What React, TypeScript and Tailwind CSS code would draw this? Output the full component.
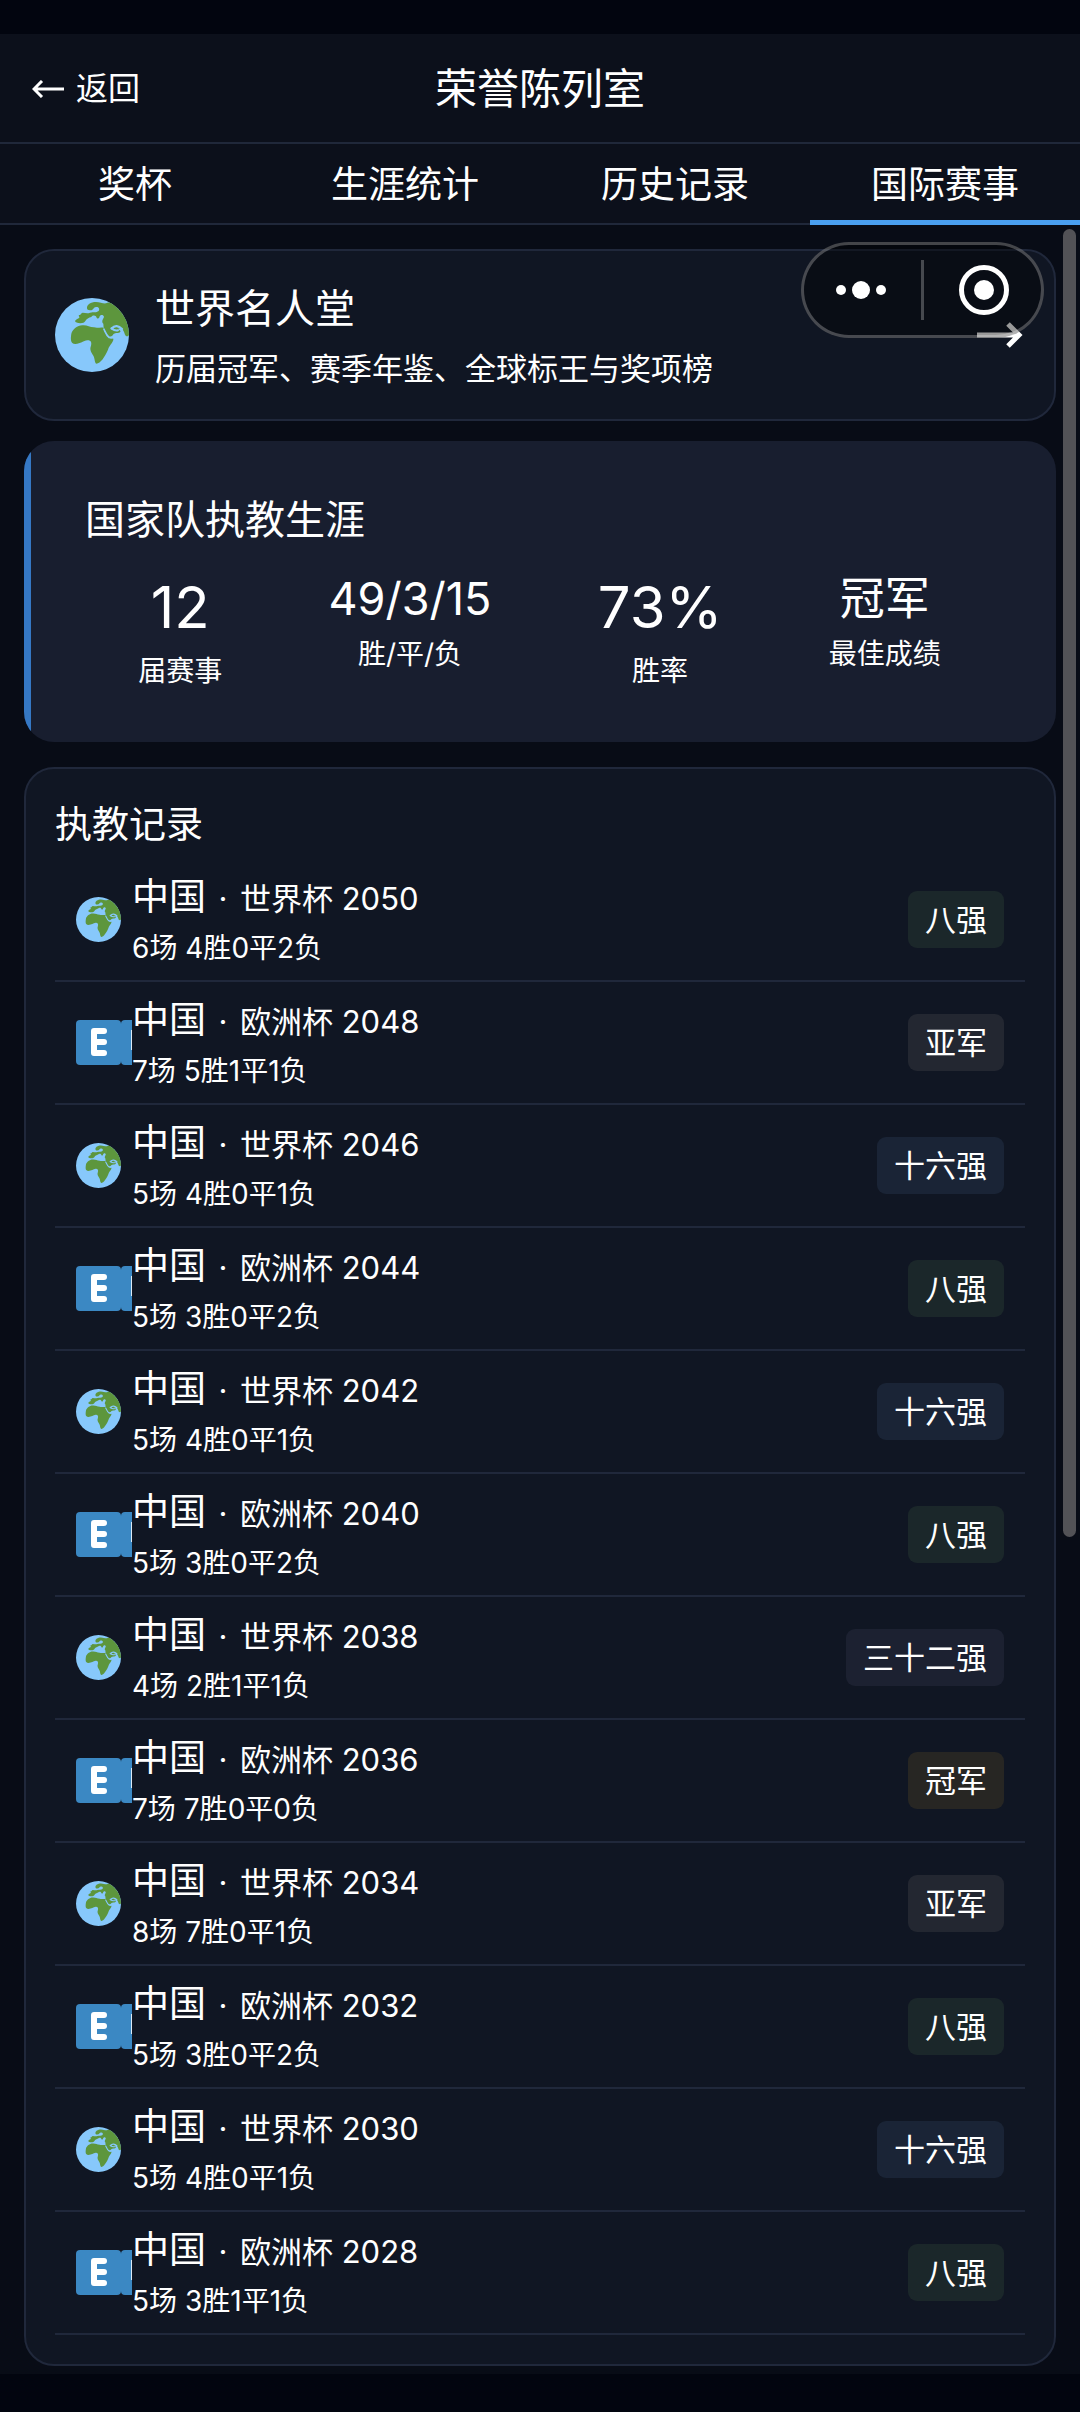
import { clsx } from 'clsx'

type Cup = 'world' | 'euro'
type Result = '冠军' | '亚军' | '八强' | '十六强' | '三十二强'

interface CoachRecord {
  year: number
  cup: Cup
  played: number
  won: number
  drawn: number
  lost: number
  result: Result
}

const tabs = ['奖杯', '生涯统计', '历史记录', '国际赛事']
const activeTab = '国际赛事'

const stats = [
  { value: '12', label: '届赛事', large: true },
  { value: '49/3/15', label: '胜/平/负', large: false },
  { value: '73%', label: '胜率', large: true },
  { value: '冠军', label: '最佳成绩', large: false }
]

const records: CoachRecord[] = [
  { year: 2050, cup: 'world', played: 6, won: 4, drawn: 0, lost: 2, result: '八强' },
  { year: 2048, cup: 'euro', played: 7, won: 5, drawn: 1, lost: 1, result: '亚军' },
  { year: 2046, cup: 'world', played: 5, won: 4, drawn: 0, lost: 1, result: '十六强' },
  { year: 2044, cup: 'euro', played: 5, won: 3, drawn: 0, lost: 2, result: '八强' },
  { year: 2042, cup: 'world', played: 5, won: 4, drawn: 0, lost: 1, result: '十六强' },
  { year: 2040, cup: 'euro', played: 5, won: 3, drawn: 0, lost: 2, result: '八强' },
  { year: 2038, cup: 'world', played: 4, won: 2, drawn: 1, lost: 1, result: '三十二强' },
  { year: 2036, cup: 'euro', played: 7, won: 7, drawn: 0, lost: 0, result: '冠军' },
  { year: 2034, cup: 'world', played: 8, won: 7, drawn: 0, lost: 1, result: '亚军' },
  { year: 2032, cup: 'euro', played: 5, won: 3, drawn: 0, lost: 2, result: '八强' },
  { year: 2030, cup: 'world', played: 5, won: 4, drawn: 0, lost: 1, result: '十六强' },
  { year: 2028, cup: 'euro', played: 5, won: 3, drawn: 1, lost: 1, result: '八强' }
]

const cupNames: Record<Cup, string> = {
  world: '世界杯',
  euro: '欧洲杯'
}

const getResultColor = (result: Result) => {
  switch (result) {
    case '冠军': return 'bg-[#272623]'
    case '亚军': return 'bg-[#232731]'
    case '八强': return 'bg-[#1b272a]'
    case '十六强': return 'bg-[#1a2436]'
    default: return 'bg-[#1c2131]'
  }
}

function Globe({ className }: { className: string }) {
  return (
    <svg viewBox="15 15 222 222" className={clsx('block shrink-0', className)} aria-hidden="true">
      <circle cx="126" cy="126" r="111" fill="#87c8fb" />
      <g fill="#5d963d">
        {/* Europe and Asia */}
        <path d="M111 46C110 35 122 27 138 27C150 27 158 32 168 31C174 28 178 28 183 31C214 50 236 82 237 125C234 134 225 130 223 119C220 109 212 104 204 108C210 113 214 114 210 118C200 122 195 119 190 124C187 130 180 134 174 129C168 124 166 115 161 106L160 92C154 86 158 80 162 72C160 64 152 65 149 70C148 76 144 79 140 74C138 66 128 66 124 72C116 74 110 78 106 84C102 92 88 92 78 88C72 84 78 80 86 76C92 72 84 70 87 66C94 66 92 60 98 59C106 60 114 62 120 59C132 56 138 60 146 54C150 48 146 42 140 42C130 40 132 52 120 52C114 52 111 50 111 46Z" />
        {/* Africa */}
        <path d="M64 122C68 108 84 96 98 97C112 96 118 103 132 103C142 106 152 102 160 104C164 114 170 130 180 136C186 138 191 135 190 140C188 150 178 156 174 170C164 192 152 211 139 212C133 208 135 196 130 188C124 178 118 170 123 158C126 148 122 141 112 142C100 144 92 152 76 153C60 152 62 136 64 122Z" />
      </g>
      {/* Red Sea and Persian Gulf */}
      <path d="M161 107C166 116 168 126 177 133L188 134" fill="none" stroke="#87c8fb" strokeWidth="5" />
      <path d="M186 106C194 96 206 98 216 108" fill="none" stroke="#87c8fb" strokeWidth="7" strokeLinecap="round" />
      <path d="M184 106C192 112 196 114 204 112" fill="none" stroke="#87c8fb" strokeWidth="6" strokeLinecap="round" />
    </svg>
  )
}

// Two letter tiles, the second one cut off by the icon column
function EuroTile() {
  return (
    <svg viewBox="0 0 56 45" className="block h-[45px] w-14" aria-hidden="true">
      <rect x="0" y="0" width="45" height="45" rx="4" fill="#3b88c3" />
      <rect x="45" y="0" width="45" height="45" rx="4" fill="#3b88c3" />
      <rect x="42" y="4" width="6" height="37" fill="#3b88c3" />
      <path d="M28 11H18V33H28M18 22H28" fill="none" stroke="#fff" strokeWidth="6" strokeLinecap="round" strokeLinejoin="round" />
      <path d="M56 10V30" stroke="#dbe9f4" strokeWidth="2" />
    </svg>
  )
}

function StatusCapsule() {
  return (
    <div className="absolute right-9 top-[242px] flex h-24 w-[243px] items-center rounded-full border-[3px] border-white/25 bg-black/40">
      <button type="button" aria-label="更多" className="flex flex-1 items-center justify-center gap-1.5 pr-[3px]">
        <span className="size-2.5 rounded-full bg-white" />
        <span className="size-[18px] rounded-full bg-white" />
        <span className="size-2.5 rounded-full bg-white" />
      </button>
      <span className="h-[60px] w-[3px] bg-white/25" />
      <button type="button" aria-label="关闭" className="flex flex-1 items-center justify-center pl-[3px]">
        <span className="flex size-[50px] items-center justify-center rounded-full border-[5px] border-white">
          <span className="size-5 rounded-full bg-white" />
        </span>
      </button>
    </div>
  )
}

export default function App() {
  return (
    <div className="relative bg-[#080c16] pt-[34px] font-['Inter','Noto_Sans_CJK_SC',sans-serif] text-white before:absolute before:inset-x-0 before:top-0 before:h-[34px] before:bg-[#02050f]">
      {/* Header */}
      <header className="grid h-[110px] grid-cols-3 items-center border-b-2 border-[#20283a] bg-[#0c101b] px-8 pt-0.5">
        <button type="button" className="flex items-center gap-3 text-[32px] leading-10">
          <svg viewBox="0 0 32 18" className="h-[18px] w-8" fill="none" stroke="currentColor" strokeWidth="3" aria-hidden="true">
            <path d="M32 9H2M10 1L2 9L10 17" />
          </svg>
          返回
        </button>
        <h1 className="text-center text-[42px] leading-[56px]">荣誉陈列室</h1>
      </header>

      {/* Tabs */}
      <nav className="grid h-[81px] grid-cols-4 border-b-2 border-[#20283a] bg-[#0c101b]">
        {tabs.map((tab) => (
          <button
            key={tab}
            type="button"
            className={clsx(
              '-mb-0.5 border-b-[5px] pt-1.5 text-[37px] leading-[52px]',
              tab === activeTab ? 'border-[#4a9ff0]' : 'border-transparent'
            )}
          >
            {tab}
          </button>
        ))}
      </nav>

      <main className="px-6 pb-2 pt-6">
        {/* Hall of fame entry */}
        <a href="#hall" className="flex items-center rounded-[30px] border-2 border-[#20283b] bg-[#101623] px-[29px] py-7">
          <Globe className="size-[74px]" />
          <div className="ml-[26px] flex-1">
            <h2 className="text-[40px] leading-[60px]">世界名人堂</h2>
            <p className="mt-2 text-[31px] leading-11">历届冠军、赛季年鉴、全球标王与奖项榜</p>
          </div>
          <svg viewBox="0 0 48 26" className="h-[26px] w-12" fill="none" stroke="currentColor" strokeWidth="5" aria-hidden="true">
            <path d="M0 13H42M31 2L42 13L31 24" />
          </svg>
        </a>

        {/* Career summary */}
        <section className="mt-5 flex overflow-hidden rounded-[30px] bg-[#181e2f]">
          <div className="w-[7px] shrink-0 bg-[#3578c4]" />
          <div className="flex-1 pb-[51px] pl-[54px] pr-[62px] pt-[54px]">
            <h2 className="text-[40px] leading-[50px]">国家队执教生涯</h2>
            <div className="mt-5 flex items-start justify-around">
              {stats.map((stat) => (
                <div key={stat.label} className="text-center">
                  <p className={stat.large ? 'text-[58px] leading-[84px]' : 'text-[45px] leading-[67px]'}>{stat.value}</p>
                  <p className="mt-[3px] text-[28px] leading-[39px]">{stat.label}</p>
                </div>
              ))}
            </div>
          </div>
        </section>

        {/* Coaching records */}
        <section className="mt-[25px] rounded-[30px] border-2 border-[#20283b] bg-[#101623] px-[29px] py-[29px]">
          <h2 className="text-[37px] leading-[54px]">执教记录</h2>
          <ul className="mt-[7px]">
            {records.map((record) => (
              <li key={record.year} className="flex items-center border-b-2 border-[#20283b] px-[21px] py-3">
                <div className="w-14 shrink-0 overflow-hidden">
                  {record.cup === 'world' ? <Globe className="size-[45px]" /> : <EuroTile />}
                </div>
                <div className="flex-1">
                  <div className="flex items-baseline text-[31px] leading-[51px]">
                    <span className="text-[37px]">中国</span>
                    <span className="w-[34px] text-center">·</span>
                    <span>{cupNames[record.cup]} {record.year}</span>
                  </div>
                  <p className="mt-[5px] text-[28px] leading-[39px]">
                    {record.played}场 {record.won}胜{record.drawn}平{record.lost}负
                  </p>
                </div>
                <span className={clsx('rounded-[9px] px-[17px] text-[31px] leading-[57px]', getResultColor(record.result))}>
                  {record.result}
                </span>
              </li>
            ))}
          </ul>
        </section>
      </main>

      {/* Gesture bar area */}
      <footer className="h-[38px] bg-[#02050f]" />

      {/* Scrollbar thumb */}
      <div className="absolute right-1 top-[229px] h-[1308px] w-[13px] rounded-full bg-[#525256]" />

      <StatusCapsule />
    </div>
  )
}
